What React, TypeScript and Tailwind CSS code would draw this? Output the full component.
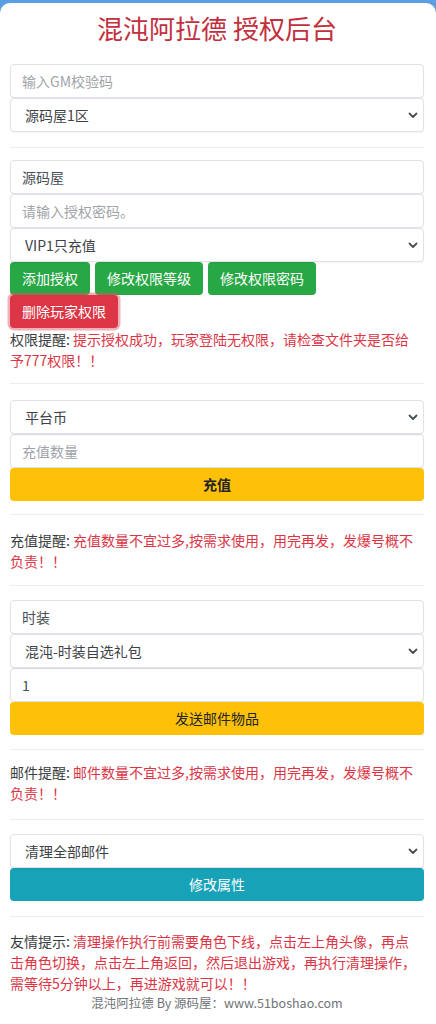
import { ReactNode } from "react";

const inputCls =
  "block w-full h-[34px] px-[11px] text-[14px] text-[#495057] placeholder:text-[#a0a4a8] bg-white border border-[#dfe2e6] rounded-[4px] outline-none shadow-[0_1px_2px_rgba(0,0,0,0.05)]";

function TextInput({ placeholder, value }: { placeholder?: string; value?: string }) {
  return <input className={inputCls} placeholder={placeholder} defaultValue={value} />;
}

function Select({ options }: { options: string[] }) {
  return (
    <div className="relative">
      <select className="block w-full h-[34px] pl-[14px] pr-[24px] text-[14px] text-[#3d4246] bg-white border border-[#dfe2e6] rounded-[4px] outline-none appearance-none shadow-[0_1px_2px_rgba(0,0,0,0.05)]">
        {options.map((o) => (
          <option key={o}>{o}</option>
        ))}
      </select>
      {/* chevron */}
      <svg
        className="absolute right-[6px] top-[14px] pointer-events-none"
        width="10"
        height="7"
        viewBox="0 0 10 7"
        fill="none"
      >
        <path d="M1.5 1.5 5 5l3.5-3.5" stroke="#4a4f54" strokeWidth="1.8" strokeLinecap="round" strokeLinejoin="round" />
      </svg>
    </div>
  );
}

function Btn({ children, color, className = "" }: { children: ReactNode; color: string; className?: string }) {
  return (
    <button className={`h-[33px] px-[12px] text-[14px] rounded-[4px] ${color} ${className}`}>{children}</button>
  );
}

// label in dark grey, message in bootstrap red
function Notice({ label, text }: { label: string; text: string }) {
  return (
    <p className="pr-[4px] text-[14px] leading-[21px] text-[#3a3d40]">
      {label}: <span className="text-[#dc3545]">{text}</span>
    </p>
  );
}

function Rule({ className }: { className: string }) {
  return <hr className={`border-t border-[#eceef0] ${className}`} />;
}

export default function App() {
  return (
    <div className="min-h-screen bg-[#5b9fe2] pt-[3px] font-['Microsoft_YaHei','Noto_Sans_CJK_SC','Noto_Sans',sans-serif]">
      <div className="min-h-[1021px] bg-white rounded-t-[10px] pl-[10px] pr-[12px]">
        <h1 className="pt-[7px] h-[43px] leading-[36px] text-center text-[26px] text-[#c2303e] font-normal">
          混沌阿拉德 授权后台
        </h1>
        <div className="mt-[18px]">
          <TextInput placeholder="输入GM校验码" />
          <Select options={["源码屋1区", "源码屋2区"]} />
        </div>

        <Rule className="mt-[15px] mb-[12px]" />

        <div>
          <TextInput value="源码屋" />
          <TextInput placeholder="请输入授权密码。" />
          <Select options={["VIP1只充值", "VIP2", "VIP3"]} />
          <div className="flex flex-wrap gap-x-[5px]">
            <Btn color="bg-[#28a745] text-white">添加授权</Btn>
            <Btn color="bg-[#28a745] text-white">修改权限等级</Btn>
            <Btn color="bg-[#28a745] text-white">修改权限密码</Btn>
            <Btn color="bg-[#dc3545] text-white" className="shadow-[0_0_0_2.5px_rgba(225,83,97,0.45)]">
              删除玩家权限
            </Btn>
          </div>
          <div className="pt-[1px]">
            <Notice label="权限提醒" text="提示授权成功，玩家登陆无权限，请检查文件夹是否给予777权限！！" />
          </div>
        </div>

        <Rule className="mt-[12px] mb-[16px]" />

        <div>
          <Select options={["平台币", "点券", "金币"]} />
          <TextInput placeholder="充值数量" />
          <Btn color="w-full bg-[#ffc107] text-[#212529] font-bold">充值</Btn>
        </div>

        <Rule className="mt-[13px] mb-[15px]" />

        <Notice label="充值提醒" text="充值数量不宜过多,按需求使用，用完再发，发爆号概不负责！！" />

        <Rule className="mt-[13px] mb-[14px]" />

        <div>
          <TextInput value="时装" />
          <Select options={["混沌-时装自选礼包"]} />
          <TextInput value="1" />
          <Btn color="w-full bg-[#ffc107] text-[#212529]">发送邮件物品</Btn>
        </div>

        <Rule className="mt-[14px] mb-[12px]" />

        <Notice label="邮件提醒" text="邮件数量不宜过多,按需求使用，用完再发，发爆号概不负责！！" />

        <Rule className="mt-[15px] mb-[14px]" />

        <div>
          <Select options={["清理全部邮件", "清理背包"]} />
          <Btn color="w-full bg-[#17a2b8] text-white">修改属性</Btn>
        </div>

        <Rule className="mt-[15px] mb-[14px]" />

        <Notice
          label="友情提示"
          text="清理操作执行前需要角色下线，点击左上角头像，再点击角色切换，点击左上角返回，然后退出游戏，再执行清理操作，需等待5分钟以上，再进游戏就可以！！"
        />
        <p className="text-center text-[12.5px] leading-[18px] text-[#6f7377]">
          混沌阿拉德 By 源码屋：www.51boshao.com
        </p>
      </div>
    </div>
  );
}
